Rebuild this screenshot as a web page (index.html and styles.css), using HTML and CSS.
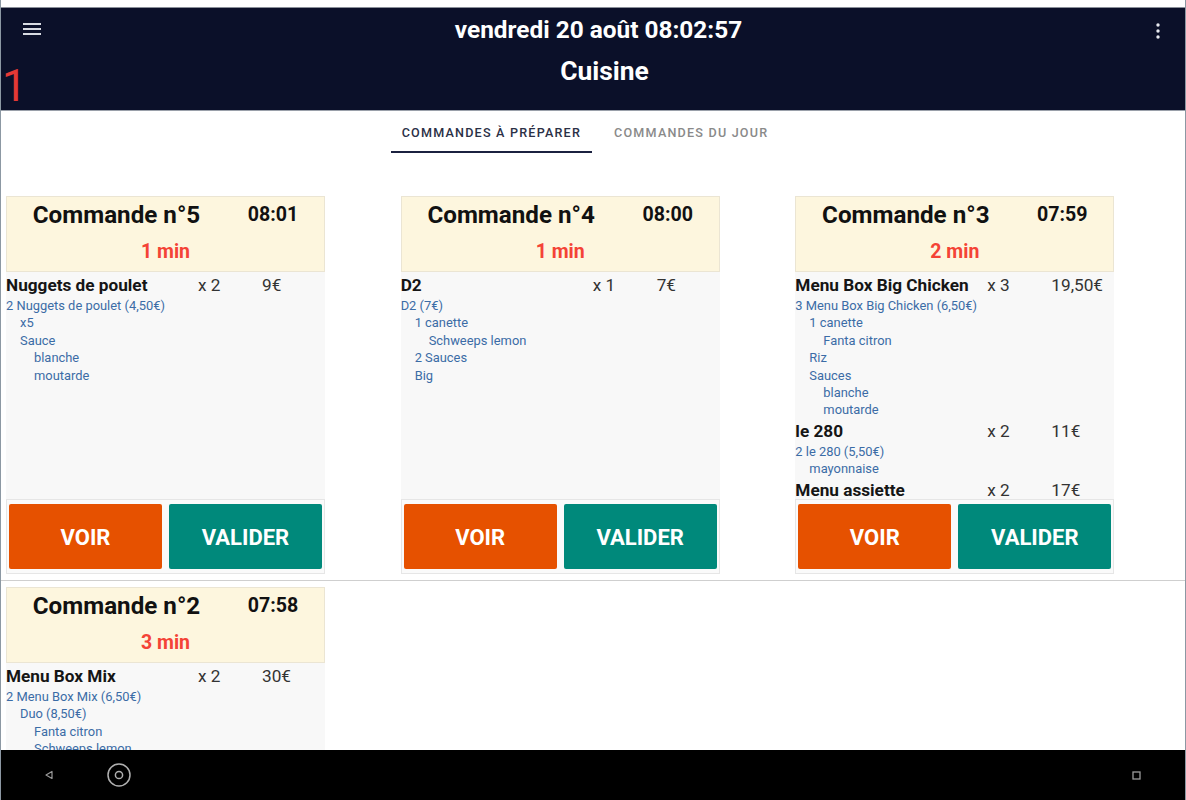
FILE: index.html
```html
<!DOCTYPE html>
<html lang="fr">
<head>
<meta charset="utf-8">
<title>Cuisine</title>
<link rel="stylesheet" href="styles.css">
</head>
<body>
<div class="screen">
  <header class="appbar">
    <button class="icon-btn menu" aria-label="menu">
      <svg width="18" height="14" viewBox="0 0 18 14"><path d="M0 2h18M0 7h18M0 12h18" stroke="#d8dbe2" stroke-width="2"/></svg>
    </button>
    <div class="titles">
      <div class="date">vendredi 20 août 08:02:57</div>
      <div class="place">Cuisine</div>
    </div>
    <button class="icon-btn more" aria-label="plus">
      <svg width="4" height="16" viewBox="0 0 4 16"><circle cx="2" cy="2" r="1.7" fill="#e8eaf0"/><circle cx="2" cy="8" r="1.7" fill="#e8eaf0"/><circle cx="2" cy="14" r="1.7" fill="#e8eaf0"/></svg>
    </button>
    <span class="badge">1</span>
  </header>

  <nav class="tabs">
    <span class="tab active">Commandes à préparer</span>
    <span class="tab">Commandes du jour</span>
  </nav>

  <main class="content">
    <section class="row first">
      <div class="col">
        <article class="card">
          <div class="card-head">
            <div class="head-top"><span class="num">Commande n°5</span><span class="time">08:01</span></div>
            <div class="elapsed">1 min</div>
          </div>
          <div class="card-body">
            <div class="item"><span class="name">Nuggets de poulet</span><span class="qty">x 2</span><span class="price">9€</span></div>
            <div class="sub l1">2 Nuggets de poulet (4,50€)</div>
            <div class="sub l2">x5</div>
            <div class="sub l2">Sauce</div>
            <div class="sub l3">blanche</div>
            <div class="sub l3">moutarde</div>
          </div>
          <div class="card-foot"><button class="btn voir">VOIR</button><button class="btn valider">VALIDER</button></div>
        </article>
      </div>
      <div class="col">
        <article class="card">
          <div class="card-head">
            <div class="head-top"><span class="num">Commande n°4</span><span class="time">08:00</span></div>
            <div class="elapsed">1 min</div>
          </div>
          <div class="card-body">
            <div class="item"><span class="name">D2</span><span class="qty">x 1</span><span class="price">7€</span></div>
            <div class="sub l1">D2 (7€)</div>
            <div class="sub l2">1 canette</div>
            <div class="sub l3">Schweeps lemon</div>
            <div class="sub l2">2 Sauces</div>
            <div class="sub l2">Big</div>
          </div>
          <div class="card-foot"><button class="btn voir">VOIR</button><button class="btn valider">VALIDER</button></div>
        </article>
      </div>
      <div class="col">
        <article class="card">
          <div class="card-head">
            <div class="head-top"><span class="num">Commande n°3</span><span class="time">07:59</span></div>
            <div class="elapsed">2 min</div>
          </div>
          <div class="card-body">
            <div class="item"><span class="name">Menu Box Big Chicken</span><span class="qty">x 3</span><span class="price">19,50€</span></div>
            <div class="sub l1">3 Menu Box Big Chicken (6,50€)</div>
            <div class="sub l2">1 canette</div>
            <div class="sub l3">Fanta citron</div>
            <div class="sub l2">Riz</div>
            <div class="sub l2">Sauces</div>
            <div class="sub l3">blanche</div>
            <div class="sub l3">moutarde</div>
            <div class="item"><span class="name">le 280</span><span class="qty">x 2</span><span class="price">11€</span></div>
            <div class="sub l1">2 le 280 (5,50€)</div>
            <div class="sub l2">mayonnaise</div>
            <div class="item"><span class="name">Menu assiette</span><span class="qty">x 2</span><span class="price">17€</span></div>
          </div>
          <div class="card-foot"><button class="btn voir">VOIR</button><button class="btn valider">VALIDER</button></div>
        </article>
      </div>
    </section>
    <section class="row">
      <div class="col">
        <article class="card">
          <div class="card-head">
            <div class="head-top"><span class="num">Commande n°2</span><span class="time">07:58</span></div>
            <div class="elapsed">3 min</div>
          </div>
          <div class="card-body">
            <div class="item"><span class="name">Menu Box Mix</span><span class="qty">x 2</span><span class="price">30€</span></div>
            <div class="sub l1">2 Menu Box Mix (6,50€)</div>
            <div class="sub l2">Duo (8,50€)</div>
            <div class="sub l3">Fanta citron</div>
            <div class="sub l3">Schweeps lemon</div>
          </div>
        </article>
      </div>
    </section>
  </main>

  <footer class="sysnav">
    <svg class="nav-back" width="10" height="10" viewBox="0 0 10 10"><path d="M8 1.5v7L2 5z" fill="none" stroke="#9a9a9a" stroke-width="1.2" stroke-linejoin="round"/></svg>
    <svg class="nav-home" width="26" height="26" viewBox="0 0 26 26"><circle cx="13" cy="13" r="11" fill="none" stroke="#b0b0b0" stroke-width="1.5"/><circle cx="13" cy="13" r="3.6" fill="none" stroke="#b0b0b0" stroke-width="1.5"/></svg>
    <span class="spacer"></span>
    <svg class="nav-recent" width="9" height="9" viewBox="0 0 9 9"><rect x="1" y="1" width="7" height="7" fill="none" stroke="#9a9a9a" stroke-width="1.3"/></svg>
  </footer>
</div>
</body>
</html>
```

FILE: styles.css
```css
* { box-sizing: border-box; margin: 0; padding: 0; }
html, body { width: 1186px; height: 800px; overflow: hidden; background: #fff; }
body { font-family: Roboto, "Noto Sans", "Liberation Sans", sans-serif; color: #111; }

.screen {
  width: 1186px;
  height: 800px;
  display: flex;
  flex-direction: column;
  border-left: 1px solid #8c98a3;
  border-right: 1px solid #8c98a3;
  padding-top: 7px;
  background: #fff;
}

.appbar {
  position: relative;
  height: 104px;
  flex: none;
  background: #0b1029;
  border-top: 1px solid #8a8f99;
  border-bottom: 1px solid #9aa0aa;
  display: flex;
  align-items: flex-start;
}
.icon-btn {
  background: none;
  border: 0;
  display: flex;
  align-items: center;
  justify-content: center;
}
.menu { width: 18px; height: 14px; margin: 14px 0 0 22px; }
.more { width: 4px; height: 16px; margin: 15px 25px 0 0; }
.titles {
  flex: 1;
  text-align: center;
  color: #fff;
  font-weight: 700;
  padding-top: 8px;
}
.date { font-size: 24.4px; line-height: 28px; }
.place { font-size: 26.4px; line-height: 30px; margin-top: 12px; padding-left: 12px; }
.badge {
  position: absolute;
  left: 1px;
  top: 52px;
  font-size: 44px;
  font-weight: 400;
  line-height: 52px;
  color: #e53935;
}

.tabs {
  flex: none;
  height: 42px;
  display: flex;
  justify-content: center;
  padding-right: 16px;
}
.tab {
  padding: 0 11px;
  font-size: 12.6px;
  font-weight: 500;
  letter-spacing: 1.2px;
  text-transform: uppercase;
  color: #8a8a8a;
  line-height: 43px;
  border-bottom: 2px solid transparent;
}
.tab + .tab { margin-left: 11px; }
.tab.active { color: #2b3046; border-bottom-color: #1b2140; }

.content { flex: 1; overflow: hidden; }
.row {
  display: grid;
  grid-template-columns: repeat(3, 1fr);
  padding: 6px 0 6px;
}
.row.first { padding-top: 43px; border-bottom: 1px solid #cfcfcf; }
.col { padding-left: 5px; }

.card { width: 319px; }
.card-head {
  background: #fdf6de;
  border: 1px solid #ebe5d3;
  padding: 2px 0 4px;
  height: 76px;
}
.head-top {
  display: grid;
  grid-template-columns: 219px 1fr;
  line-height: 32px;
}
.num { text-align: center; font-size: 24.2px; font-weight: 700; }
.time { text-align: center; font-size: 19.6px; font-weight: 700; padding-right: 4px; }
.elapsed {
  text-align: center;
  color: #f44336;
  font-size: 19.5px;
  font-weight: 700;
  line-height: 28px;
  margin-top: 7px;
}
.card-body {
  background: #f8f8f8;
  height: 227px;
  overflow: hidden;
  padding-top: 1px;
}
.item { display: flex; line-height: 24px; font-size: 17.2px; }
.name { width: 192px; font-weight: 700; color: #151515; white-space: nowrap; }
.qty { width: 64px; color: #333; }
.price { color: #333; }
.sub { font-size: 12.9px; line-height: 17.4px; color: #3b6ca6; white-space: nowrap; }
.l1 { padding-left: 0; }
.l2 { padding-left: 14px; }
.l3 { padding-left: 28px; }

.card-foot {
  display: flex;
  gap: 7px;
  padding: 4px 2px;
  border: 1px solid #e6e6e6;
  background: #fafafa;
}
.btn {
  flex: 1;
  height: 65px;
  border: 0;
  border-radius: 2px;
  color: #fff;
  font-family: inherit;
  font-size: 22px;
  font-weight: 700;
  padding-top: 2px;
}
.voir { background: #e65100; }
.valider { background: #00897b; }

.sysnav {
  flex: none;
  height: 50px;
  background: #000;
  display: flex;
  align-items: center;
  padding-left: 43px;
}
.nav-back { margin-right: 52px; }
.spacer { flex: 1; }
.nav-recent { margin-right: 44px; }
```
